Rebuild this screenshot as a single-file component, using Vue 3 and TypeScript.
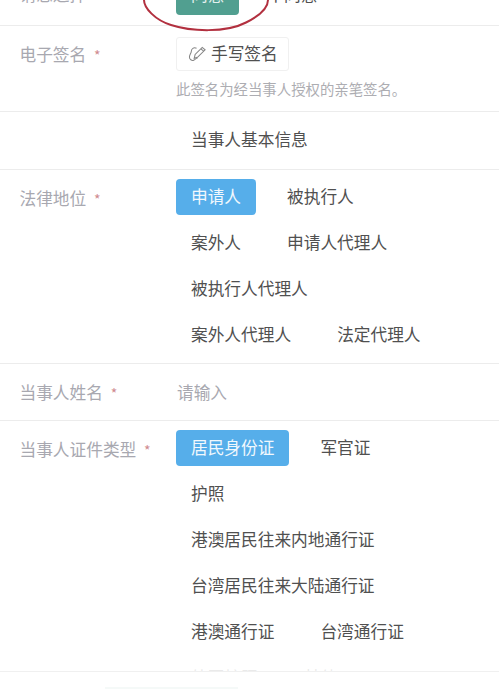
<script setup lang="ts">
const statusOptions = ['申请人', '被执行人', '案外人', '申请人代理人', '被执行人代理人', '案外人代理人', '法定代理人']
const idOptions = ['居民身份证', '军官证', '护照', '港澳居民往来内地通行证', '台湾居民往来大陆通行证', '港澳通行证', '台湾通行证', '外国护照', '其他']
</script>

<template>
  <div class="page">
    <div class="form">
      <section class="row row-consent">
        <div class="label">请您选择 <span class="star">*</span></div>
        <div class="chips">
          <span class="chip chip-green">同意</span>
          <span class="chip">不同意</span>
        </div>
      </section>
      <section class="row row-sign">
        <div class="label">电子签名 <span class="star">*</span></div>
        <div class="field">
          <button class="sign-btn" type="button">
            <svg class="pen" viewBox="0 0 20 20" width="19" height="19" fill="none" stroke="#858585" stroke-width="1.100">
              <path d="M9 3.500C6 2 3.500 4 3.500 6.500c0 2-2 3.500-2 6s2.500 4.500 4.500 3.500c1.500-.7 3-2.500 4.500-2.500" />
              <path d="M6.500 14l1-4L15 2.500l3 2.500-7.500 7.500z" />
              <path d="M13.500 4l3 2.500" />
            </svg>
            <span class="sign-text">手写签名</span>
          </button>
          <p class="hint">此签名为经当事人授权的亲笔签名。</p>
        </div>
      </section>
      <section class="row row-title">
        <div class="section-title">当事人基本信息</div>
      </section>
      <section class="row row-status">
        <div class="label">法律地位 <span class="star">*</span></div>
        <div class="chips">
          <span v-for="(o, i) in statusOptions" :key="o" class="chip" :class="{ 'chip-blue': i === 0 }">{{ o }}</span>
        </div>
      </section>
      <section class="row row-name">
        <div class="label">当事人姓名 <span class="star">*</span></div>
        <div class="placeholder">请输入</div>
      </section>
      <section class="row row-id">
        <div class="label">当事人证件类型 <span class="star">*</span></div>
        <div class="chips">
          <span v-for="(o, i) in idOptions" :key="o" class="chip" :class="{ 'chip-blue': i === 0 }">{{ o }}</span>
        </div>
      </section>
    </div>
    <div class="footer"><span class="footer-shape"></span></div>
    <svg class="ring" viewBox="0 0 132 40" width="132" height="40" fill="none">
      <path d="M3 0C3 8 14 20 30 25C50 31.500 85 33 105 22.500C118 16 127 8 127 0" stroke="#b2303f" stroke-width="2" />
    </svg>
  </div>
</template>

<style scoped>
.page {
  position: relative;
  width: 499px;
  height: 689px;
  overflow: hidden;
  background: #fff;
  font-family: "Noto Sans CJK SC", "Liberation Sans", sans-serif;
  font-size: 16.700px;
  color: #505050;
}
.form {
  margin-top: -27px;
}
.row {
  display: flex;
  align-items: flex-start;
  border-bottom: 1px solid #ececec;
  box-sizing: border-box;
  padding-left: 19.500px;
}
.label {
  flex: 0 0 156.500px;
  color: #a8a8b0;
  line-height: 38px;
  white-space: nowrap;
}
.star {
  color: #cf8a8f;
  margin-left: 4px;
  font-size: 14px;
}
.chips {
  display: flex;
  flex-wrap: wrap;
  gap: 10px 16px;
  width: 280px;
}
.chip {
  height: 36px;
  line-height: 34px;
  padding: 0 15px;
  border-radius: 4px;
  white-space: nowrap;
}
.chip-blue {
  background: #56aeea;
  color: #f1f8fd;
}
.chip-green {
  background: #519f90;
  color: #e4f1ee;
  height: 42px;
  line-height: 42px;
}
.row-consent {
  height: 53px;
}
.row-consent .label {
  line-height: 42px;
}
.row-consent .chip:not(.chip-green) {
  line-height: 42px;
  margin-left: -3px;
}
.row-sign {
  height: 86px;
  padding-top: 11px;
}
.row-sign .label {
  line-height: 34px;
}
.sign-btn {
  display: flex;
  align-items: center;
  gap: 4px;
  box-sizing: border-box;
  width: 113px;
  height: 34px;
  padding: 0 0 0 11px;
  background: #fff;
  border: 1px solid #f0f0f0;
  border-radius: 3px;
  font: inherit;
  color: #505050;
}
.pen {
  flex: none;
}
.sign-text {
  line-height: 30px;
  margin-bottom: 2px;
}
.hint {
  margin: 8px 0 0;
  font-size: 14.400px;
  line-height: 20px;
  color: #adadb2;
  white-space: nowrap;
}
.row-title {
  height: 58px;
  padding-left: 191px;
  padding-bottom: 3px;
  align-items: center;
}
.row-status {
  height: 194px;
  padding-top: 9px;
}
.row-name {
  height: 57px;
  padding-top: 11px;
}
.row-name .label,
.placeholder {
  line-height: 34px;
}
.placeholder {
  color: #a8a8b0;
  padding-left: 1px;
}
.row-id {
  padding-top: 9px;
  border-bottom: none;
}
.footer {
  position: absolute;
  left: 0;
  right: 0;
  bottom: 0;
  height: 17px;
  background: #fff;
  border-top: 1px solid #f0f0f0;
  box-shadow: 0 -3px 0 rgba(255, 255, 255, 0.88);
}
.footer-shape {
  position: absolute;
  left: 105px;
  top: 15px;
  width: 133px;
  height: 4px;
  background: #f5f9f8;
}
.ring {
  position: absolute;
  left: 141px;
  top: 0;
}
</style>
